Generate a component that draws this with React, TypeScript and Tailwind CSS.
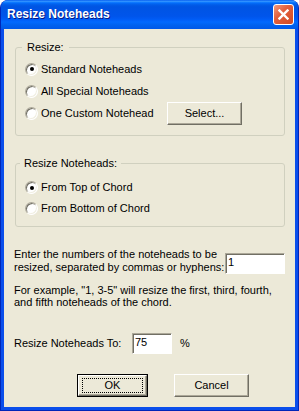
import React from "react";

function Radio({ checked }: { checked?: boolean }) {
  return (
    <span className="flex h-[13px] w-[13px] shrink-0 items-center justify-center rounded-full border border-t-[#ACA899] border-l-[#ACA899] border-r-white border-b-white bg-white shadow-[inset_1px_1px_0_#716F64,inset_-1px_-1px_0_#F1EFE2]">
      {checked && <span className="h-[4px] w-[4px] rounded-full bg-black" />}
    </span>
  );
}

function RadioRow({ label, checked, h = "h-[22px]", children }: { label: string; checked?: boolean; h?: string; children?: React.ReactNode }) {
  return (
    <div className={`flex ${h} items-center pl-[9px]`}>
      <Radio checked={checked} />
      <span className="ml-[3px]">{label}</span>
      {children}
    </div>
  );
}

function Button({ children, isDefault, w = "w-[75px]" }: { children: React.ReactNode; isDefault?: boolean; w?: string }) {
  const face =
    "flex h-full w-full items-center justify-center border border-t-white border-l-white border-r-[#716F64] border-b-[#716F64] bg-[#ECE9D8] shadow-[inset_-1px_-1px_0_#ACA899]";
  if (isDefault) {
    return (
      <div className={`h-[23px] ${w} border border-black`}>
        <div className={face}>
          <div className="flex h-[15px] w-[calc(100%-6px)] items-center justify-center border border-dotted border-black">
            {children}
          </div>
        </div>
      </div>
    );
  }
  return (
    <div className={`h-[23px] ${w}`}>
      <div className={face}>{children}</div>
    </div>
  );
}

function Field({ value, w }: { value: string; w: string }) {
  return (
    <div className={`h-[21px] ${w} border border-t-[#ACA899] border-l-[#ACA899] border-r-white border-b-white bg-white pl-[2px] leading-[17px] shadow-[inset_1px_1px_0_#716F64]`}>
      {value}
    </div>
  );
}

export default function App() {
  return (
    <div className="flex h-[411px] w-[299px] flex-col overflow-hidden rounded-t-[8px] border border-t-0 border-[#0026B8] bg-[#0A4EEB] font-['Liberation_Sans',Arial,sans-serif] text-[11px] leading-[13px] text-black">
      <div className="flex h-[29px] shrink-0 items-center justify-between pl-[6px] pr-[4px] bg-[linear-gradient(180deg,#0058EE_0%,#3593FF_4%,#288EFF_6%,#127DFF_8%,#036FFC_10%,#0262EE_14%,#0057E5_20%,#0054E3_24%,#0055EB_56%,#005BF5_66%,#026AFE_76%,#0062EF_86%,#0058E8_100%)]">
        <span className="text-[12px] font-bold text-white [text-shadow:1px_1px_0_#0A1883]">Resize Noteheads</span>
        <div className="flex h-[21px] w-[21px] items-center justify-center rounded-[3px] border border-white bg-[linear-gradient(135deg,#F29A7E_0%,#E2603E_40%,#D24A22_100%)]">
          <svg width="11" height="11" viewBox="0 0 11 11">
            <path d="M1.5 1.5 L9.5 9.5 M9.5 1.5 L1.5 9.5" stroke="white" strokeWidth="2.4" strokeLinecap="square" />
          </svg>
        </div>
      </div>

      <div className="mx-[3px] mb-[3px] flex flex-1 flex-col bg-[#ECE9D8]">
        <fieldset className="ml-[11px] mr-[10px] mt-[12px] rounded-[3px] border border-[#D0D0BF] pb-[11px]">
          <legend className="ml-[6px] px-[5px]">Resize:</legend>
          <div className="pt-[4px]">
            <RadioRow label="Standard Noteheads" checked />
            <RadioRow label="All Special Noteheads" />
            <RadioRow label="One Custom Notehead">
              <div className="ml-auto mr-[42px]">
                <Button>Select...</Button>
              </div>
            </RadioRow>
          </div>
        </fieldset>

        <fieldset className="ml-[11px] mr-[10px] mt-[21px] rounded-[3px] border border-[#D0D0BF] pb-[7px]">
          <legend className="ml-[4px] px-[4px]">Resize Noteheads:</legend>
          <div className="pt-[7px]">
            <RadioRow label="From Top of Chord" checked h="h-[21px]" />
            <RadioRow label="From Bottom of Chord" h="h-[21px]" />
          </div>
        </fieldset>

        <div className="mt-[21px] flex items-start pl-[10px]">
          <p className="w-[211px]">
            Enter the numbers of the noteheads to be
            <br />
            resized, separated by commas or hyphens:
          </p>
          <div className="mt-[5px]">
            <Field value="1" w="w-[60px]" />
          </div>
        </div>

        <p className="mt-[10px] pl-[10px] leading-[12px]">
          For example, "1, 3-5" will resize the first, third, fourth,
          <br />
          and fifth noteheads of the chord.
        </p>

        <div className="mt-[25px] flex items-center pl-[10px]">
          <span className="w-[118px]">Resize Noteheads To:</span>
          <Field value="75" w="w-[40px]" />
          <span className="ml-[8px]">%</span>
        </div>

        <div className="mt-[20px] flex gap-[26px] pl-[73px]">
          <Button isDefault w="w-[71px]">OK</Button>
          <Button>Cancel</Button>
        </div>
      </div>
    </div>
  );
}
